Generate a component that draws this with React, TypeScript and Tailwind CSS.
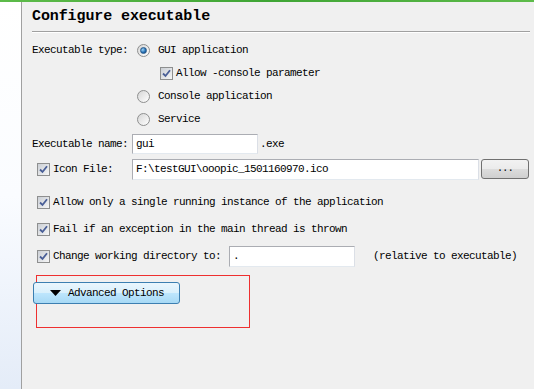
import React from 'react';

const font = { fontFamily: '"Liberation Mono", "DejaVu Sans Mono", monospace' };

function Radio({ checked }: { checked?: boolean }) {
  return (
    <span className="relative inline-flex h-[13px] w-[13px] shrink-0 items-center justify-center rounded-full border border-[#8e8f8f] bg-gradient-to-br from-[#d6d6d6] to-[#ffffff]">
      {checked && (
        <span className="h-[7px] w-[7px] rounded-full border border-[#2a5a8a] bg-[radial-gradient(circle_at_35%_35%,#9fd4f7,#1f6bb0_60%,#0d3e73)]" />
      )}
    </span>
  );
}

function Check({ checked = true }: { checked?: boolean }) {
  return (
    <span className="inline-flex h-[13px] w-[13px] shrink-0 items-center justify-center border border-[#8e8f8f] bg-white">
      <span className="flex h-[11px] w-[11px] items-center justify-center bg-gradient-to-br from-[#cbcfd5] to-[#f6f6f6]">
        {checked && (
          <svg width="9" height="9" viewBox="0 0 9 9">
            <path d="M1 4.5 L3.5 7 L8 1.2" fill="none" stroke="#4a5f97" strokeWidth="1.8" />
          </svg>
        )}
      </span>
    </span>
  );
}

function TextBox({ value, className }: { value: string; className: string }) {
  return (
    <div
      className={`flex items-center border border-[#abadb3] border-b-[#e3e9ef] border-r-[#dbdfe6] bg-white px-[3px] ${className}`}
    >
      {value}
    </div>
  );
}

export default function App() {
  return (
    <div
      className="flex h-[389px] w-[534px] flex-col overflow-hidden bg-[#f0f0f0] text-[11px] tracking-[-0.6px] text-black"
      style={font}
    >
      <div className="h-[2px] bg-gradient-to-r from-[#5dbb4a] via-[#3fa535] to-[#5dbb4a]" />
      <div className="flex flex-1">
        <div className="w-[21px] bg-gradient-to-b from-white via-[#fafcff] to-[#e4ecf8]" />
        <div className="w-px bg-[#a0a0a0]" />
        <div className="flex flex-1 flex-col pl-[10px] pr-[4px]">
          <div className="flex h-[29px] items-center pt-[1px] text-[15px] font-bold tracking-[-0.1px]">
            Configure executable
          </div>
          <div className="h-px bg-[#a0a0a0]" />
          <div className="h-px bg-white" />

          <div className="pt-[6px]">
            <div className="flex h-[23px] items-center">
              <span className="w-[105px]">Executable type:</span>
              <Radio checked />
              <span className="ml-[8px]">GUI application</span>
            </div>
            <div className="flex h-[23px] items-center pl-[128px]">
              <Check />
              <span className="ml-[3px]">Allow -console parameter</span>
            </div>
            <div className="flex h-[23px] items-center pl-[105px]">
              <Radio />
              <span className="ml-[8px]">Console application</span>
            </div>
            <div className="flex h-[23px] items-center pl-[105px]">
              <Radio />
              <span className="ml-[8px]">Service</span>
            </div>
          </div>

          <div className="mt-[2px] flex h-[22px] items-center">
            <span className="w-[100px]">Executable name:</span>
            <TextBox value="gui" className="h-[20px] w-[126px]" />
            <span className="ml-[2px]">.exe</span>
          </div>

          <div className="mt-[3px] flex h-[22px] items-center">
            <span className="flex w-[100px] items-center pl-[5px]">
              <Check />
              <span className="ml-[3px]">Icon File:</span>
            </span>
            <TextBox value="F:\testGUI\ooopic_1501160970.ico" className="h-[21px] w-[347px]" />
            <button className="ml-[2px] flex h-[20px] w-[48px] items-center justify-center rounded-[3px] border border-[#707070] bg-[linear-gradient(#f2f2f2,#ebebeb_50%,#dddddd_50%,#cfcfcf)] pb-[2px] text-[10px]">
              ...
            </button>
          </div>

          <div className="mt-[11px] flex h-[22px] items-center pl-[5px]">
            <Check />
            <span className="ml-[3px]">Allow only a single running instance of the application</span>
          </div>
          <div className="mt-[5px] flex h-[22px] items-center pl-[5px]">
            <Check />
            <span className="ml-[3px]">Fail if an exception in the main thread is thrown</span>
          </div>
          <div className="mt-[5px] flex h-[22px] items-center pl-[5px]">
            <Check />
            <span className="ml-[3px] w-[176px]">Change working directory to:</span>
            <TextBox value="." className="h-[21px] w-[126px]" />
            <span className="ml-[18px]">(relative to executable)</span>
          </div>

          <div className="ml-[4px] mt-[8px] h-[53px] w-[214px] border border-[#ee3030]">
            <button className="-ml-[4px] mt-[6px] flex h-[22px] w-[147px] items-center rounded-[3px] border border-[#3c7fb1] bg-[linear-gradient(#eaf6fd,#d9f0fc_50%,#bee6fd_50%,#a7d9f5)] pl-[16px]">
              <svg width="11" height="6" viewBox="0 0 11 6" className="mr-[7px]">
                <path d="M0 0 H11 L5.5 6 Z" fill="#000" />
              </svg>
              <span>Advanced Options</span>
            </button>
          </div>
        </div>
      </div>
    </div>
  );
}
